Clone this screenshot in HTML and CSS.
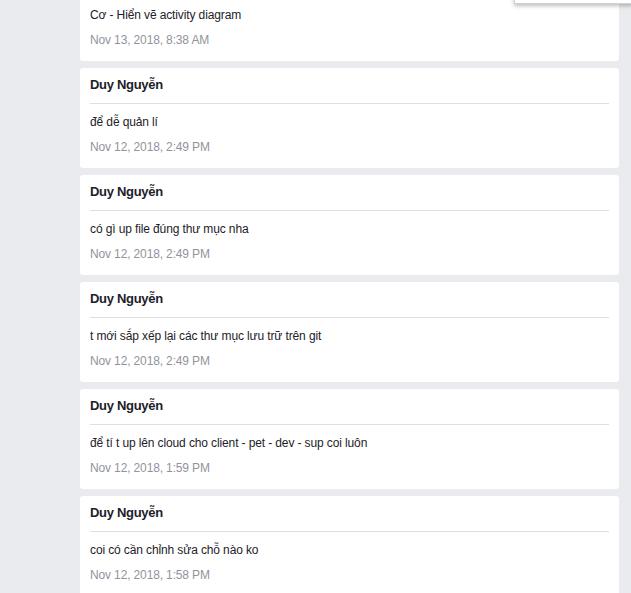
FILE: index.html
```html
<!DOCTYPE html>
<html>
<head>
<meta charset="utf-8">
<link rel="stylesheet" href="styles.css">
</head>
<body>
<div class="popup"></div>
<div class="feed">
  <div class="card">
    <div class="name">Duy Nguyễn</div>
    <div class="msg">Cơ - Hiển vẽ activity diagram</div>
    <div class="date">Nov 13, 2018, 8:38 AM</div>
  </div>
  <div class="card">
    <div class="name">Duy Nguyễn</div>
    <div class="msg">để dễ quản lí</div>
    <div class="date">Nov 12, 2018, 2:49 PM</div>
  </div>
  <div class="card">
    <div class="name">Duy Nguyễn</div>
    <div class="msg">có gì up file đúng thư mục nha</div>
    <div class="date">Nov 12, 2018, 2:49 PM</div>
  </div>
  <div class="card">
    <div class="name">Duy Nguyễn</div>
    <div class="msg">t mới sắp xếp lại các thư mục lưu trữ trên git</div>
    <div class="date">Nov 12, 2018, 2:49 PM</div>
  </div>
  <div class="card">
    <div class="name">Duy Nguyễn</div>
    <div class="msg">để tí t up lên cloud cho client - pet - dev - sup coi luôn</div>
    <div class="date">Nov 12, 2018, 1:59 PM</div>
  </div>
  <div class="card">
    <div class="name">Duy Nguyễn</div>
    <div class="msg">coi có cần chỉnh sửa chỗ nào ko</div>
    <div class="date">Nov 12, 2018, 1:58 PM</div>
  </div>
</div>
</body>
</html>
```
FILE: styles.css
```css
html, body {
  margin: 0;
  padding: 0;
  background: #e9ebee;
  overflow: hidden;
}
body {
  font-family: "Liberation Sans", Arial, sans-serif;
  color: #1d2129;
  height: 593px;
}
.feed {
  margin-top: -39px;
  margin-left: 80px;
  width: 539px;
  display: flex;
  flex-direction: column;
  gap: 7px;
}
.card {
  background: #fff;
  border-radius: 3px;
  padding: 9px 10px 12px;
  height: 100px;
  box-sizing: border-box;
}
.name {
  font-size: 13px;
  font-weight: bold;
  line-height: 16px;
  letter-spacing: -0.3px;
  padding-bottom: 10px;
  border-bottom: 1px solid #dddfe2;
}
.msg {
  font-size: 12px;
  line-height: 16px;
  letter-spacing: -0.12px;
  margin-top: 10px;
}
.date {
  font-size: 12px;
  line-height: 16px;
  letter-spacing: -0.14px;
  margin-top: 9px;
  color: #90949c;
}
.popup {
  position: absolute;
  top: -20px;
  left: 514px;
  width: 117px;
  height: 22px;
  background: #fff;
  border: 1px solid #cfd1d5;
  box-shadow: 0 2px 4px rgba(0,0,0,0.25);
  z-index: 2;
}
```
